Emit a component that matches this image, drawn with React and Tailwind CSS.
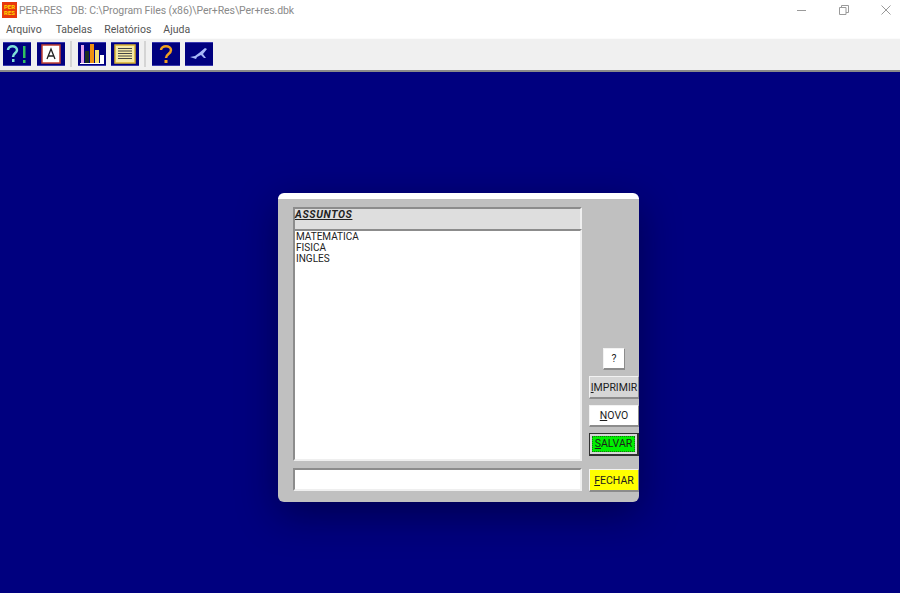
const ui = { fontFamily: 'Roboto, "Liberation Sans", sans-serif' };

function Tool({ w = "w-[28px]", children }) {
  return (
    <div className={w + " h-[24px] bg-[#00007f] border-y border-[#3a3ab0] flex items-center justify-center"}>
      <svg width="28" height="22" viewBox="0 0 28 22">{children}</svg>
    </div>
  );
}

function Sep() {
  return <div className="w-[2px] h-[26px] bg-[#d4d4d4] ml-[5px] mr-[6px]" />;
}

function Btn({ className = "", children }) {
  return (
    <div className={"flex items-center justify-center font-['Roboto',sans-serif] text-[10.500px] text-[#1c1c1c] border-t border-l border-[#f2f2f2] border-r border-b-2 border-r-[#8c8c8c] border-b-[#8c8c8c] " + className}>
      {children}
    </div>
  );
}

export default function App() {
  return (
    <div className="w-[900px] h-[593px] overflow-hidden flex flex-col bg-white">
      <div className="h-[19px] flex items-center shrink-0 text-[10.500px] tracking-[-0.1px] text-[#8a8a8a]" style={ui}>
        <div className="w-[15px] h-[16px] ml-[2px] bg-[#e8380c] flex flex-col items-center justify-center text-[6px] leading-[6px] tracking-normal font-bold text-[#ffd800]">
          <span>PER</span>
          <span>RES</span>
        </div>
        <span className="ml-[2px] mt-[2px]">PER+RES</span>
        <span className="ml-[9px] mt-[2px]">DB: C:\Program Files (x86)\Per+Res\Per+res.dbk</span>
        <div className="ml-auto flex items-center">
          <svg width="9" height="10" viewBox="0 0 9 10" className="mr-[33px]"><path d="M0 5.500h9" stroke="#9a9a9a" fill="none" /></svg>
          <svg width="10" height="10" viewBox="0 0 10 10" className="mr-[32px]"><path d="M.5 2.500h6.500v7h-6.500zM2.500 2.500v-2h7v7h-2.500" stroke="#9a9a9a" fill="none" /></svg>
          <svg width="10" height="10" viewBox="0 0 10 10" className="mr-[9px]"><path d="M.5.500l9 9M9.500.500l-9 9" stroke="#9a9a9a" fill="none" /></svg>
        </div>
      </div>

      <div className="h-[19px] flex items-center shrink-0 pl-[6px] pt-[2px] gap-[12px] text-[10.500px] text-[#555555]" style={ui}>
        <span className="mr-[2px]">Arquivo</span>
        <span>Tabelas</span>
        <span>Relatórios</span>
        <span>Ajuda</span>
      </div>

      <div className="h-[32px] shrink-0 bg-[#f0f0f0] border-t border-[#fbfbfb] flex items-center pl-[3px] pb-[2px]">
        <Tool>
          <path d="M5 7c0-5 9-5 9 0 0 3-4 3-4 7" stroke="#7fe0d8" strokeWidth="2.500" fill="none" />
          <rect x="9" y="16" width="2.500" height="3" fill="#7fe0d8" />
          <rect x="20" y="3" width="2.500" height="12" fill="#30c060" />
          <rect x="20" y="17" width="2.500" height="3" fill="#30c060" />
        </Tool>
        <div className="ml-[6px]">
          <Tool>
            <rect x="5" y="2" width="18" height="18" fill="#fff" stroke="#c04030" strokeWidth="1.500" />
            <path d="M10 16l4-10 4 10M11.500 13h5" stroke="#222" strokeWidth="1.300" fill="none" />
          </Tool>
        </div>
        <Sep />
        <Tool>
          <rect x="3" y="2" width="3" height="18" fill="#e0a0e8" />
          <rect x="7" y="8" width="4" height="12" fill="#1c3020" />
          <rect x="12" y="1" width="4" height="19" fill="#f09010" />
          <rect x="17" y="7" width="4" height="13" fill="#f8e070" />
          <rect x="22" y="12" width="4" height="8" fill="#fff" />
          <path d="M2 20.500h24" stroke="#fff" />
        </Tool>
        <div className="ml-[5px]">
          <Tool>
            <rect x="4" y="2" width="20" height="18" fill="#f5e9a8" stroke="#d8b030" strokeWidth="1.500" />
            <path d="M7 5.500h14M7 8h14M7 10.500h14M7 13h14M7 15.500h14" stroke="#444" strokeWidth="1.200" />
          </Tool>
        </div>
        <Sep />
        <Tool>
          <path d="M9 7c0-5 10-5 10 0 0 4-5 4-5 8" stroke="#f0a020" strokeWidth="2.500" fill="none" />
          <rect x="12.500" y="17" width="3" height="3" fill="#f0a020" />
        </Tool>
        <div className="ml-[5px]">
          <Tool>
            <path d="M5 14l5-1 4-3 6-5 2 1-4 5 3 4-2 0-3-3-4 2-1 2z" fill="#a8b8f8" />
          </Tool>
        </div>
      </div>

      <div className="flex-1 bg-[#00007f] border-t-2 border-t-[#8a8a8a] pl-[278px] pt-[121px]">
        <div className="w-[361px] h-[309px] rounded-[6px] bg-[#c0c0c0] border-t-[6px] border-t-white shadow-[0_12px_40px_rgba(0,0,20,0.45)] flex">
          <div className="w-[289px] ml-[15px] mt-[8px] flex flex-col">
            <div className="h-[22px] bg-[#dedede] border-t-2 border-l-2 border-[#8c8c8c] border-r-2 border-r-[#efefef] font-['Roboto',sans-serif] text-[10.500px] leading-[12px] tracking-[0.6px] font-bold italic underline text-[#222222]">
              ASSUNTOS
            </div>
            <div className="h-[232px] bg-white border-t-2 border-l-2 border-[#8c8c8c] border-r-2 border-r-[#efefef] border-b-2 border-b-[#efefef] pl-[1px] font-['Roboto',sans-serif] text-[10px] leading-[11px] text-[#222222]">
              <div>MATEMATICA</div>
              <div>FISICA</div>
              <div>INGLES</div>
            </div>
            <div className="h-[23px] mt-[7px] bg-white border-t-2 border-l-2 border-[#8c8c8c] border-r-2 border-r-[#efefef] border-b-2 border-b-[#efefef]" />
          </div>
          <div className="w-[50px] ml-[7px] mt-[149px] flex flex-col">
            <Btn className="w-[22px] h-[22px] ml-[14px] pt-[1px] bg-white">?</Btn>
            <Btn className="w-[50px] h-[23px] mt-[6px] pt-[1px] bg-[#d6d6d6]"><span><u>I</u>MPRIMIR</span></Btn>
            <Btn className="w-[50px] h-[22px] mt-[6px] bg-white"><span><u>N</u>OVO</span></Btn>
            <div className="w-[50px] h-[23px] mt-[6px] p-[2px] bg-[#d6d6d6] border border-[#303030] border-r-2 border-b-2 flex items-center justify-center font-['Roboto',sans-serif] text-[10.500px] text-[#1c1c1c]">
              <span className="w-full h-full bg-[#00f000] flex items-center justify-center border border-dotted border-[#107010]"><span><u>S</u>ALVAR</span></span>
            </div>
            <Btn className="w-[50px] h-[23px] mt-[13px] pt-[1px] bg-[#ffff00]"><span><u>F</u>ECHAR</span></Btn>
          </div>
        </div>
      </div>
    </div>
  );
}
